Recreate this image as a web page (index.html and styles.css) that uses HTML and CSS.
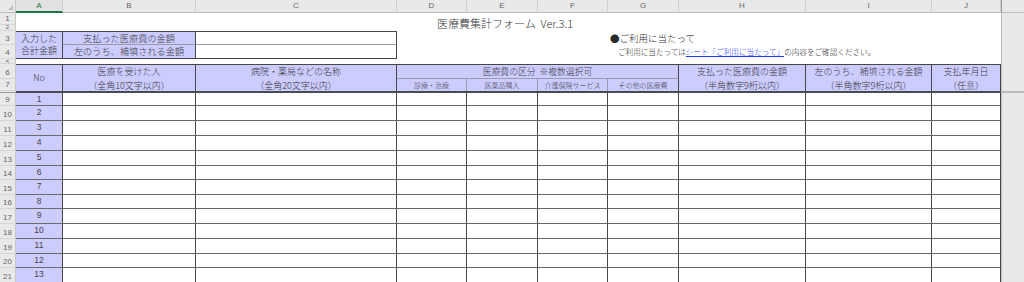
FILE: index.html
```html
<!DOCTYPE html>
<html lang="ja">
<head>
<meta charset="utf-8">
<title>医療費集計フォーム</title>
<link rel="stylesheet" href="styles.css">
</head>
<body>
<div class="sheet">
  <div class="g colhdr">
    <div class="ch corner"></div>
    <div class="ch sel">A</div>
    <div class="ch">B</div>
    <div class="ch">C</div>
    <div class="ch">D</div>
    <div class="ch">E</div>
    <div class="ch">F</div>
    <div class="ch">G</div>
    <div class="ch">H</div>
    <div class="ch">I</div>
    <div class="ch">J</div>
    <div class="ch fillh"></div>
  </div>

  <div class="g blk12">
    <div class="rh r1">1</div>
    <div class="rh r2 tiny">2</div>
    <div class="title">医療費集計フォーム&nbsp; Ver.3.1</div>
    <div class="fill span2"></div>
  </div>

  <div class="g blk34">
    <div class="rh r1">3</div>
    <div class="rh r2">4</div>
    <div class="sumlabel pur">入力した<br>合計金額</div>
    <div class="b3 pur">支払った医療費の金額</div>
    <div class="b4 pur">左のうち、補填される金額</div>
    <div class="c3"></div>
    <div class="c4"></div>
    <div class="note1">●ご利用に当たって</div>
    <div class="note2">ご利用に当たっては<span class="link">シート「ご利用に当たって」</span>の内容をご確認ください。</div>
    <div class="fill span2"></div>
  </div>

  <div class="g row5">
    <div class="rh">5</div>
    <div class="blank"></div>
    <div class="fill"></div>
  </div>

  <div class="g blk67">
    <div class="rh r1">6</div>
    <div class="rh r2">7</div>
    <div class="hd pur ca">No</div>
    <div class="hd pur cb"><span>医療を受けた人</span><span>（全角10文字以内）</span></div>
    <div class="hd pur cc"><span>病院・薬局などの名称</span><span>（全角20文字以内）</span></div>
    <div class="grp pur">医療費の区分&nbsp; ※複数選択可</div>
    <div class="sub pur cd">診療・治療</div>
    <div class="sub pur ce">医薬品購入</div>
    <div class="sub pur cf">介護保険サービス</div>
    <div class="sub pur cg last">その他の医療費</div>
    <div class="hd pur chh"><span>支払った医療費の金額</span><span>（半角数字9桁以内）</span></div>
    <div class="hd pur ci"><span>左のうち、補填される金額</span><span>（半角数字9桁以内）</span></div>
    <div class="hd pur cj"><span>支払年月日</span><span>（任意）</span></div>
    <div class="fill span2"></div>
  </div>

  <div class="g row8">
    <div class="rh"></div>
    <div class="thick"></div>
    <div class="fill line"></div>
  </div>

  <div class="g dr h13"><div class="rh">9</div><div class="no">1</div><div class="d"></div><div class="d"></div><div class="d"></div><div class="d"></div><div class="d"></div><div class="d"></div><div class="d"></div><div class="d"></div><div class="d"></div><div class="fill"></div></div>
  <div class="g dr h15"><div class="rh">10</div><div class="no">2</div><div class="d"></div><div class="d"></div><div class="d"></div><div class="d"></div><div class="d"></div><div class="d"></div><div class="d"></div><div class="d"></div><div class="d"></div><div class="fill"></div></div>
  <div class="g dr h15"><div class="rh">11</div><div class="no">3</div><div class="d"></div><div class="d"></div><div class="d"></div><div class="d"></div><div class="d"></div><div class="d"></div><div class="d"></div><div class="d"></div><div class="d"></div><div class="fill"></div></div>
  <div class="g dr h15"><div class="rh">12</div><div class="no">4</div><div class="d"></div><div class="d"></div><div class="d"></div><div class="d"></div><div class="d"></div><div class="d"></div><div class="d"></div><div class="d"></div><div class="d"></div><div class="fill"></div></div>
  <div class="g dr h15"><div class="rh">13</div><div class="no">5</div><div class="d"></div><div class="d"></div><div class="d"></div><div class="d"></div><div class="d"></div><div class="d"></div><div class="d"></div><div class="d"></div><div class="d"></div><div class="fill"></div></div>
  <div class="g dr h14"><div class="rh">14</div><div class="no">6</div><div class="d"></div><div class="d"></div><div class="d"></div><div class="d"></div><div class="d"></div><div class="d"></div><div class="d"></div><div class="d"></div><div class="d"></div><div class="fill"></div></div>
  <div class="g dr h15"><div class="rh">15</div><div class="no">7</div><div class="d"></div><div class="d"></div><div class="d"></div><div class="d"></div><div class="d"></div><div class="d"></div><div class="d"></div><div class="d"></div><div class="d"></div><div class="fill"></div></div>
  <div class="g dr h14"><div class="rh">16</div><div class="no">8</div><div class="d"></div><div class="d"></div><div class="d"></div><div class="d"></div><div class="d"></div><div class="d"></div><div class="d"></div><div class="d"></div><div class="d"></div><div class="fill"></div></div>
  <div class="g dr h15"><div class="rh">17</div><div class="no">9</div><div class="d"></div><div class="d"></div><div class="d"></div><div class="d"></div><div class="d"></div><div class="d"></div><div class="d"></div><div class="d"></div><div class="d"></div><div class="fill"></div></div>
  <div class="g dr h15"><div class="rh">18</div><div class="no">10</div><div class="d"></div><div class="d"></div><div class="d"></div><div class="d"></div><div class="d"></div><div class="d"></div><div class="d"></div><div class="d"></div><div class="d"></div><div class="fill"></div></div>
  <div class="g dr h15"><div class="rh">19</div><div class="no">11</div><div class="d"></div><div class="d"></div><div class="d"></div><div class="d"></div><div class="d"></div><div class="d"></div><div class="d"></div><div class="d"></div><div class="d"></div><div class="fill"></div></div>
  <div class="g dr h14"><div class="rh">20</div><div class="no">12</div><div class="d"></div><div class="d"></div><div class="d"></div><div class="d"></div><div class="d"></div><div class="d"></div><div class="d"></div><div class="d"></div><div class="d"></div><div class="fill"></div></div>
  <div class="g dr h15"><div class="rh">21</div><div class="no">13</div><div class="d"></div><div class="d"></div><div class="d"></div><div class="d"></div><div class="d"></div><div class="d"></div><div class="d"></div><div class="d"></div><div class="d"></div><div class="fill"></div></div>
</div>
</body>
</html>
```

FILE: styles.css
```css
:root {
  --cols: 16px 47px 133px 201px 70px 71px 70px 71px 127px 126px 69px 1fr;
  --pur: #ccccff;
  --dark: #474747;
  --mid: #6a6a6a;
  --soft: #9a9ab0;
  --hdrbg: #e9e9e9;
}

html, body {
  margin: 0;
  padding: 0;
  background: #ffffff;
}

body {
  width: 1024px;
  height: 282px;
  overflow: hidden;
  font-family: "Noto Sans CJK JP", "Noto Sans", sans-serif;
  font-weight: 300;
  color: #3a3a3a;
}

.sheet {
  display: flex;
  flex-direction: column;
}

.g {
  display: grid;
  grid-template-columns: var(--cols);
}

.g > div {
  box-sizing: border-box;
  min-width: 0;
}

/* column header */
.colhdr {
  height: 13px;
}

.ch {
  background: var(--hdrbg);
  border-right: 1px solid #cfcfcf;
  border-bottom: 1px solid #bcbcbc;
  font: 400 8px/12px "Liberation Sans", sans-serif;
  color: #666;
  text-align: center;
}

.ch.sel {
  color: #217346;
  background: #e2e2e2;
  border-bottom: 2px solid #217346;
  line-height: 11px;
}

.ch.corner {
  position: relative;
  border-right: 1px solid #c6c6c6;
}

.ch.corner::after {
  content: "";
  position: absolute;
  right: 2px;
  bottom: 2px;
  border-style: solid;
  border-width: 0 0 5px 5px;
  border-color: transparent transparent #bdbdbd transparent;
}

.ch.fillh {
  border-left: 1px solid #9a9a9a;
  border-right: none;
}

/* row headers */
.rh {
  background: var(--hdrbg);
  border-right: 1px solid #c6c6c6;
  border-bottom: 1px solid #d6d6d6;
  font: 400 8px/8px "Liberation Sans", sans-serif;
  color: #666;
  display: flex;
  align-items: flex-end;
  justify-content: center;
  padding-bottom: 1px;
  overflow: hidden;
}

.rh.tiny {
  font-size: 6px;
  line-height: 5px;
  padding-bottom: 0;
}

.fill {
  background: #e9e9e9;
  border-left: 1px solid #bdbdbd;
}

.fill.span2 {
  grid-column: 12;
  grid-row: 1 / 3;
}

.fill.line {
  background: #bdbdbd;
}

.r1 { grid-column: 1; grid-row: 1; }
.r2 { grid-column: 1; grid-row: 2; }

/* rows 1-2 */
.blk12 {
  grid-template-rows: 12px 6px;
}

.title {
  grid-column: 5 / 12;
  grid-row: 1 / 3;
  font-size: 11px;
  line-height: 18px;
  padding-left: 40px;
  white-space: nowrap;
  color: #3a3a3a;
  padding-top: 1px;
}

/* rows 3-4 */
.blk34 {
  grid-template-rows: 14px 14px;
}

.pur {
  background: var(--pur);
}

.sumlabel {
  grid-column: 2;
  grid-row: 1 / 3;
  border-top: 1px solid var(--dark);
  border-bottom: 1px solid var(--dark);
  border-right: 1px solid var(--dark);
  font-size: 9px;
  line-height: 12px;
  text-align: center;
  display: flex;
  align-items: center;
  justify-content: center;
}

.b3, .b4 {
  grid-column: 3;
  border-right: 1px solid var(--dark);
  font-size: 9.2px;
  line-height: 12px;
  text-align: center;
  white-space: nowrap;
}

.b3 {
  grid-row: 1;
  border-top: 1px solid var(--dark);
  border-bottom: 1px solid #9a9aa6;
}

.b4 {
  grid-row: 2;
  border-bottom: 1px solid var(--dark);
}

.c3, .c4 {
  grid-column: 4;
  border-right: 1px solid var(--dark);
}

.c3 {
  grid-row: 1;
  border-top: 1px solid var(--dark);
  border-bottom: 1px solid #9a9a9a;
}

.c4 {
  grid-row: 2;
  border-bottom: 1px solid var(--dark);
}

.note1 {
  grid-column: 8 / 12;
  grid-row: 1;
  font-size: 9.5px;
  line-height: 14px;
  padding-left: 2px;
  white-space: nowrap;
  color: #2a2a2a;
}

.note2 {
  grid-column: 8 / 12;
  grid-row: 2;
  font-size: 7.6px;
  line-height: 14px;
  padding-left: 10px;
  white-space: nowrap;
  color: #2a2a2a;
}

.link {
  color: #1f3dff;
  text-decoration: underline;
}

/* row 5 */
.row5 {
  height: 5px;
}

.row5 .rh {
  align-items: flex-start;
  padding: 0;
  font-size: 6px;
  line-height: 6px;
}

.blank {
  grid-column: 2 / 12;
}

/* rows 6-7 */
.blk67 {
  grid-template-rows: 15px 12px;
}

.hd {
  grid-row: 1 / 3;
  border-top: 1px solid var(--dark);
  border-right: 1px solid var(--dark);
  font-size: 9px;
  line-height: 14px;
  text-align: center;
  white-space: nowrap;
  display: flex;
  flex-direction: column;
  align-items: center;
  justify-content: flex-start;
}

.ca { grid-column: 2; justify-content: center; }
.cb { grid-column: 3; }
.cc { grid-column: 4; }
.chh { grid-column: 9; }
.ci { grid-column: 10; }
.cj { grid-column: 11; }

.grp {
  grid-column: 5 / 9;
  grid-row: 1;
  border-top: 1px solid var(--dark);
  border-right: 1px solid var(--dark);
  border-bottom: 1px solid var(--soft);
  font-size: 8.8px;
  line-height: 14px;
  text-align: center;
  white-space: nowrap;
}

.sub {
  grid-row: 2;
  border-right: 1px solid var(--soft);
  font-size: 7px;
  line-height: 12px;
  text-align: center;
  white-space: nowrap;
}

.sub.last {
  border-right: 1px solid var(--dark);
}

.cd { grid-column: 5; }
.ce { grid-column: 6; }
.cf { grid-column: 7; }
.cg { grid-column: 8; }

/* row 8 (hidden) */
.row8 {
  height: 2px;
}

.row8 .rh {
  padding: 0;
  border-bottom: 1px solid #9a9a9a;
}

.thick {
  grid-column: 2 / 12;
  background: #4a4a52;
}

/* data rows */
.h13 { height: 13px; }
.h14 { height: 14px; }
.h15 { height: 15px; }

.dr .rh {
  padding-bottom: 1px;
}

.no {
  background: var(--pur);
  border-right: 1px solid var(--dark);
  border-bottom: 1px solid var(--mid);
  font: 400 8.5px/12px "Liberation Sans", sans-serif;
  color: #444;
  text-align: center;
}

.d {
  background: #ffffff;
  border-right: 1px solid var(--dark);
  border-bottom: 1px solid var(--mid);
}
```
